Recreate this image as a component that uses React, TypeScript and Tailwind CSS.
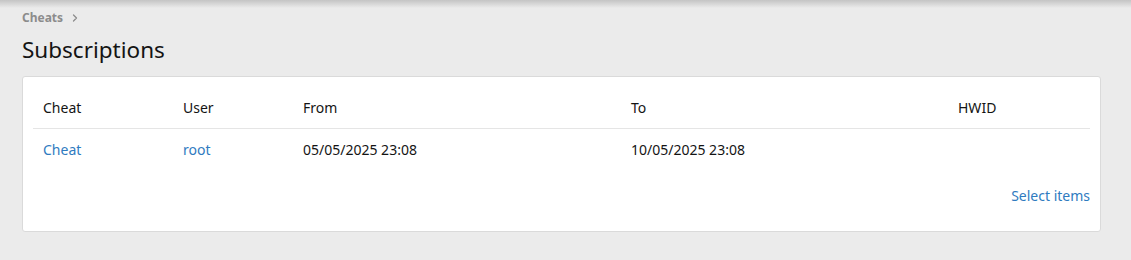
import React from 'react';
import { ChevronRight } from 'lucide-react';

const columns = [
  { key: 'cheat', label: 'Cheat', width: 'w-[140px]' },
  { key: 'user', label: 'User', width: 'w-[120px]' },
  { key: 'from', label: 'From', width: 'w-[328px]' },
  { key: 'to', label: 'To', width: 'w-[327px]' },
  { key: 'hwid', label: 'HWID', width: 'flex-1' },
];

const rows = [
  {
    cheat: 'Cheat',
    user: 'root',
    from: '05/05/2025 23:08',
    to: '10/05/2025 23:08',
    hwid: '',
  },
];

const App: React.FC = () => {
  return (
    <div
      className="relative w-[1131px] h-[260px] bg-[#ebebeb] text-[#141414] overflow-hidden"
      style={{ fontFamily: '"Noto Sans", "Open Sans", sans-serif' }}
    >
      <div className="absolute inset-x-0 top-0 h-[8px] bg-gradient-to-b from-[#c4c4c4] to-[#ebebeb]" />

      <div className="px-[22px] pt-[9px]">
        <div className="flex items-center gap-[6px] h-[18px] text-[12px] font-bold text-[#8c8c8c]">
          <span>Cheats</span>
          <ChevronRight className="w-[12px] h-[12px]" strokeWidth={2.5} />
        </div>

        <h1 className="mt-[3px] h-[40px] flex items-center text-[22.5px] leading-none text-[#141414]">
          Subscriptions
        </h1>

        <div className="mt-[6px] w-[1079px] bg-white border border-[#dadada] rounded-[3px] p-[10px]">
          <div className="flex h-[42px] items-center border-b border-[#e5e5e5] text-[14px]">
            {columns.map((col) => (
              <div key={col.key} className={`${col.width} pl-[10px]`}>
                {col.label}
              </div>
            ))}
          </div>

          {rows.map((row, i) => (
            <div key={i} className="flex h-[41px] items-center text-[14px]">
              <div className="w-[140px] pl-[10px] text-[#2f7bbf]">{row.cheat}</div>
              <div className="w-[120px] pl-[10px] text-[#2f7bbf]">{row.user}</div>
              <div className="w-[328px] pl-[10px]">{row.from}</div>
              <div className="w-[327px] pl-[10px]">{row.to}</div>
              <div className="flex-1 pl-[10px]">{row.hwid}</div>
            </div>
          ))}

          <div className="flex h-[51px] items-center justify-end text-[14px] text-[#2f7bbf]">
            <span>Select items</span>
          </div>
        </div>
      </div>
    </div>
  );
};

export default App;
